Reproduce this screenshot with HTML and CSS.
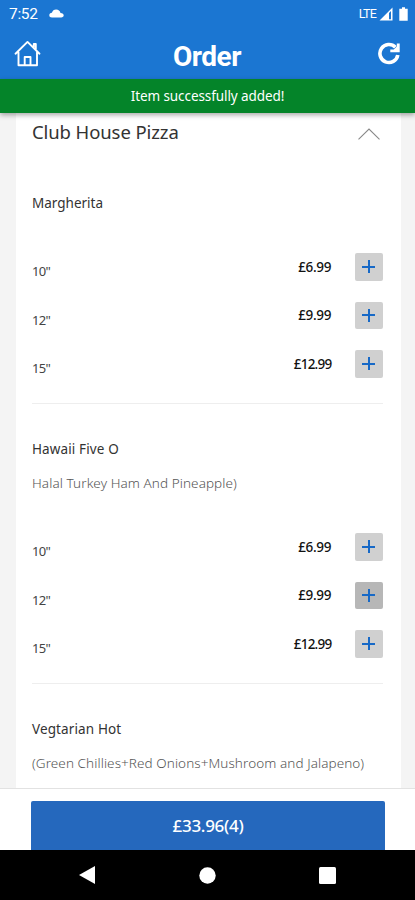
FILE: index.html
```html
<!DOCTYPE html>
<html lang="en">
<head>
<meta charset="utf-8">
<title>Order</title>
<link rel="stylesheet" href="styles.css">
</head>
<body>
<div class="app">
  <header class="header">
    <div class="status">
      <span class="clock">7:52</span>
      <svg class="cloud" width="15" height="9" viewBox="0 0 15 9"><path fill="#fff" d="M3 8.500C1.300 8.500.3 7.500.3 6.200S1.300 3.900 2.900 3.800C3.500 1.600 5 .4 7.100.4c2.300 0 4 1.500 4.400 3.500 2.100 0 3.200 1 3.200 2.400 0 1.300-1 2.200-2.500 2.200z"/></svg>
      <span class="lte">LTE</span>
      <svg class="signal" width="14" height="14" viewBox="0 0 14 14"><path fill="#fff" fill-rule="evenodd" d="M.5 13.500 13.500.5v13zM10 6v6.300h2V4z"/></svg>
      <svg class="battery" width="9" height="14" viewBox="0 0 9 14"><path fill="#fff" d="M3 .3h3v1.500h2.700v12H.3v-12H3z"/></svg>
    </div>
    <div class="toolbar">
      <svg width="27" height="27" viewBox="0 0 27 27" fill="none" stroke="#fff" stroke-width="1.900" stroke-linejoin="round" stroke-linecap="round"><path d="M1.500 13.700 13.500 1.900l12 11.800M4.500 12.500v12.800h18.500V12.500M10.700 25v-8h5.800v8M19.800 7V4h2v5"/></svg>
      <h1>Order</h1>
      <svg width="24" height="24" viewBox="0 0 24 24" fill="none" stroke="#fff" stroke-width="3.600"><path d="M18.400 6.200A9 9 0 1 0 20.800 14"/><path fill="#fff" stroke="none" d="M22.700 2.500v8.700h-9.400V8.500h3.500l3-3V2.500z"/></svg>
    </div>
  </header>
  <div class="toast">Item successfully added!</div>
  <main class="page">
    <section class="card">
      <div class="category"><h2>Club House Pizza</h2>
        <svg width="22" height="12" viewBox="0 0 22 12" fill="none" stroke="#888" stroke-width="1.100"><path d="M.5 11.300 11 1l10.500 10.300"/></svg></div>
      <article class="item">
        <h3 class="n1">Margherita</h3>
        <div class="sizes">
          <div class="row"><span class="size">10"</span><span class="price">£6.99</span><button class="add"></button></div>
          <div class="row"><span class="size">12"</span><span class="price">£9.99</span><button class="add"></button></div>
          <div class="row"><span class="size">15"</span><span class="price long">£12.99</span><button class="add"></button></div>
        </div>
      </article>
      <article class="item">
        <h3 class="n2">Hawaii Five O</h3>
        <p class="d2">Halal Turkey Ham And Pineapple)</p>
        <div class="sizes">
          <div class="row"><span class="size">10"</span><span class="price">£6.99</span><button class="add"></button></div>
          <div class="row"><span class="size">12"</span><span class="price">£9.99</span><button class="add pressed"></button></div>
          <div class="row"><span class="size">15"</span><span class="price long">£12.99</span><button class="add"></button></div>
        </div>
      </article>
      <article class="item">
        <h3 class="n3">Vegtarian Hot</h3>
        <p class="d3">(Green Chillies+Red Onions+Mushroom and Jalapeno)</p>
      </article>
    </section>
  </main>
  <footer class="basket"><button class="total">£33.96(4)</button></footer>
  <nav class="nav">
    <svg width="17" height="18" viewBox="0 0 17 18"><path fill="#fff" d="M16 0v18L0 9z"/></svg>
    <svg width="17" height="17" viewBox="0 0 17 17"><circle cx="8.500" cy="8.500" r="8.200" fill="#fff"/></svg>
    <svg width="17" height="17" viewBox="0 0 17 17"><rect width="17" height="17" rx="1.500" fill="#fff"/></svg>
  </nav>
</div>
</body>
</html>
```
FILE: styles.css
```css
* { box-sizing: border-box; margin: 0; padding: 0; }
body { font-family: "Noto Sans", sans-serif; background: #f4f4f4; }
.app { width: 415px; height: 900px; display: flex; flex-direction: column; overflow: hidden; }
.header { height: 79px; flex: none; background: #1b76d2; color: #fff; }
.status { height: 27px; display: flex; align-items: center; padding: 0 7px 0 9px; font-family: Roboto, sans-serif; }
.clock { font-size: 15.500px; width: 40px; letter-spacing: -.3px; }
.lte { font-size: 12.500px; margin-left: auto; letter-spacing: -.8px; }
.signal { margin-left: 3px; }
.battery { margin-left: 6px; }
.toolbar { display: flex; justify-content: space-between; align-items: center; height: 52px; padding: 0 14px; }
.toolbar h1 { font: 700 28px/50px Roboto, sans-serif; letter-spacing: -.5px; padding: 7px 4px 0 0; }
.toast { position: relative; z-index: 1; height: 34px; flex: none; background: #048429; color: #fff; text-align: center; font-size: 13.500px; line-height: 34px; letter-spacing: -.08px; box-shadow: 0 2px 5px rgba(0,0,0,.35); }
.page { height: 675px; flex: none; padding: 0 14px 0 16px; overflow: hidden; }
.card { background: #fff; height: 100%; padding: 0 18px 0 16px; }
.category { height: 38px; display: flex; justify-content: space-between; padding-right: 3px; }
.category h2 { font-size: 18.500px; font-weight: 400; line-height: 38px; color: #333; letter-spacing: -.1px; }
.category svg { margin-top: 15px; }
.item { height: 280px; padding-top: 34px; border-bottom: 1px solid #eee; display: flex; flex-direction: column; }
.item:first-of-type { height: 253px; padding-top: 41px; }
.item:last-child { border: 0; }
.item h3 { font-size: 13.500px; line-height: 22px; font-weight: 400; color: #333; letter-spacing: .12px; }
.item .n1 { letter-spacing: 0; }
.item p { font-size: 13.500px; line-height: 22px; margin-top: 12px; font-weight: 300; color: #555; white-space: nowrap; letter-spacing: .08px; }
.sizes { margin-top: auto; padding-bottom: 25.500px; display: grid; gap: 21px; }
.row { height: 27.500px; display: flex; align-items: center; }
.size { font-size: 13px; flex: 1; padding-top: 9px; color: #444; letter-spacing: -.7px; }
.price { font-size: 13.500px; font-weight: 500; color: #111; letter-spacing: -.35px; margin-right: 23.500px; }
.price.long { letter-spacing: -.75px; margin-right: 23px; }
.add { width: 28px; height: 27.500px; margin-right: .5px; border: 0; border-radius: 2px; background: linear-gradient(#1769c7,#1769c7) center/13px 2px no-repeat, linear-gradient(#1769c7,#1769c7) center/2px 13px no-repeat, #d0d0d0; }
.add.pressed { background-color: #b7b7b7; }
.basket { height: 62px; flex: none; background: #fff; border-top: 1px solid #e2e2e2; padding: 12px 30px 0 31px; }
.total { display: block; width: 100%; height: 49px; border: 0; border-radius: 2px 2px 0 0; background: #2568bd; color: #fff; font: 500 17px/49px "Noto Sans", sans-serif; letter-spacing: -.3px; }
.nav { flex: 1; background: #000; display: flex; align-items: center; justify-content: space-between; padding: 0 79px; }
```
